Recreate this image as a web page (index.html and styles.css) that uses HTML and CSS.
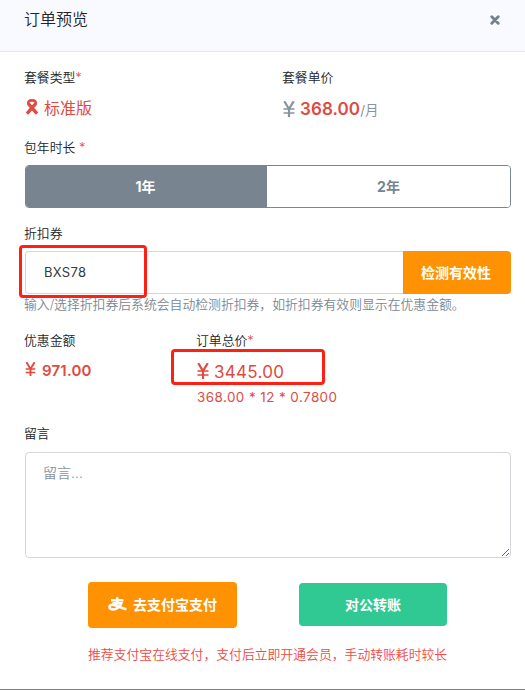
FILE: index.html
```html
<!DOCTYPE html>
<html lang="zh-CN">
<head>
    <meta charset="UTF-8">
    <meta name="viewport" content="width=device-width, initial-scale=1.0">
    <title>订单预览</title>
    <link rel="stylesheet" href="styles.css">
</head>
<body>
    <svg class="icon-defs">
        <symbol id="icon-yen" viewBox="0 0 12 16">
            <path d="M1.3 0.2 L6 8 L10.7 0.2 M6 8 V16" fill="none" stroke="currentColor" stroke-width="2.2"/>
            <path d="M0.5 8 H11.5 M0.5 12 H11.5" fill="none" stroke="currentColor" stroke-width="1.7"/>
        </symbol>
    </svg>
    <div class="modal">
        <div class="modal-header">
            <h1>订单预览</h1>
            <button type="button" class="close-button" aria-label="关闭">
                <svg width="10" height="10" viewBox="0 0 10 10"><path d="M1.8 1.8 L8.2 8.2 M8.2 1.8 L1.8 8.2" stroke="#74808b" stroke-width="2.9" stroke-linecap="round"/></svg>
            </button>
        </div>

        <div class="modal-body">
            <div class="plan-row">
                <div>
                    <label>套餐类型<span class="required">*</span></label>
                    <div class="plan-name">
                        <svg width="14" height="16" viewBox="0 0 14 16">
                            <path d="M3.3 4.6 L12 14.6 M10.7 4.6 L2 14.6" fill="none" stroke="currentColor" stroke-width="3.3"/>
                            <path d="M3.5 5.4 C2.6 2.6 4 1.4 7 1.4 C10 1.4 11.4 2.6 10.5 5.4" fill="none" stroke="currentColor" stroke-width="2.6"/>
                        </svg>
                        <span>标准版</span>
                    </div>
                </div>
                <div>
                    <label>套餐单价</label>
                    <div class="unit-price">
                        <svg class="yen"><use href="#icon-yen"/></svg>
                        <strong>368.00</strong><span class="unit">/月</span>
                    </div>
                </div>
            </div>

            <div class="form-group duration">
                <label>包年时长 <span class="required">*</span></label>
                <div class="button-group">
                    <button type="button" class="active">1年</button>
                    <button type="button">2年</button>
                </div>
            </div>

            <div class="form-group coupon">
                <label for="coupon">折扣券</label>
                <div class="input-group">
                    <input type="text" id="coupon" value="BXS78">
                    <button type="button">检测有效性</button>
                    <span class="mark mark-coupon"></span>
                </div>
                <div class="hint">输入/选择折扣券后系统会自动检测折扣券，如折扣券有效则显示在优惠金额。</div>
            </div>

            <div class="total-row">
                <div>
                    <label>优惠金额</label>
                    <div class="discount">
                        <svg class="yen"><use href="#icon-yen"/></svg>
                        <strong>971.00</strong>
                    </div>
                </div>
                <div>
                    <label>订单总价<span class="required">*</span></label>
                    <div class="total">
                        <svg class="yen"><use href="#icon-yen"/></svg>
                        <span>3445.00</span>
                        <span class="mark mark-total"></span>
                    </div>
                    <div class="formula">368.00 * 12 * 0.7800</div>
                </div>
            </div>

            <div class="form-group message">
                <label for="message">留言</label>
                <textarea id="message" placeholder="留言..."></textarea>
            </div>

            <div class="actions">
                <button type="button" class="alipay-button">
                    <svg width="19" height="14" viewBox="0 0 19 14" fill="none" stroke="currentColor">
                        <path d="M3 3.2 H15.5 M9.2 0.3 V6.2 M4.5 6.2 H13.4 C12.2 10 8.4 12.6 4.7 12.4 C0.3 12 0.5 8 4.5 7.8 C8.8 7.8 12 11 18.4 12.2" stroke-width="2.5"/>
                    </svg>
                    <span>去支付宝支付</span>
                </button>
                <button type="button" class="transfer-button">对公转账</button>
            </div>
            <p class="pay-tip">推荐支付宝在线支付，支付后立即开通会员，手动转账耗时较长</p>
        </div>
    </div>
</body>
</html>
```

FILE: styles.css
```css
* {
    margin: 0;
    padding: 0;
    box-sizing: border-box;
}

body {
    background: #fff;
    color: #212529;
    font-family: Inter, "Noto Sans CJK SC", sans-serif;
    font-size: 12.83px;
    overflow: hidden;
}

button, input, textarea {
    font-family: inherit;
}

button {
    border: none;
    font-size: 14px;
    font-weight: 700;
    cursor: pointer;
}

.icon-defs {
    display: none;
}

.modal {
    height: 690px;
    border-bottom: 1px solid #808080;
}

.modal-header {
    display: flex;
    justify-content: space-between;
    align-items: center;
    height: 52px;
    padding: 0 25px 12px 24px;
    background: #f9faff;
    border-bottom: 1px solid #e3e7ed;
}

h1 {
    margin-top: -2px;
    font-size: 16px;
    font-weight: 350;
    line-height: 24px;
}

.close-button {
    display: flex;
    background: none;
}

.modal-body {
    padding: 15px 14px 0 25px;
}

label {
    display: block;
    margin-left: -1px;
    line-height: 21px;
    font-weight: 350;
    white-space: pre;
}

.required, .plan-name, .discount, .total, .formula {
    color: #e04a3f;
}

.yen {
    width: 12px;
    height: 16px;
    flex: none;
}

.plan-row {
    display: grid;
    grid-template-columns: 258px 1fr;
    height: 70px;
}

.plan-name, .unit-price {
    display: flex;
    align-items: center;
    height: 38px;
}

.plan-name {
    gap: 5px;
    font-size: 16px;
}

.unit-price {
    color: #8794a1;
    padding-top: 4px;
}

.unit-price .yen {
    margin-right: 5px;
}

.unit-price strong {
    color: #e04a3f;
    font-size: 17px;
    font-weight: 600;
    letter-spacing: 0.1px;
}

.unit {
    font-size: 13.5px;
}

.button-group {
    display: flex;
    height: 43px;
    margin-top: 7px;
    border: 1px solid #78848f;
    border-radius: 4px;
    overflow: hidden;
}

.button-group button {
    flex: 1;
    padding-bottom: 2px;
    background: #fff;
    color: #78848f;
}

.button-group .active {
    flex: none;
    width: 241px;
    padding-right: 2px;
    background: #78848f;
    color: #fff;
}

.coupon {
    margin-top: 15px;
}

.input-group {
    display: flex;
    position: relative;
    height: 43px;
    margin-top: 7px;
}

.input-group input {
    flex: 1;
    min-width: 0;
    padding: 0 18px 1px;
    border: 1px solid #d5d7df;
    border-right: none;
    border-radius: 4px 0 0 4px;
    color: #343a40;
    font-size: 13px;
    letter-spacing: 0.3px;
}

.input-group button {
    width: 108px;
    padding: 0 2px 2px 0;
    background: #ff9203;
    color: #fff;
    border-radius: 0 4px 4px 0;
}

.mark {
    position: absolute;
    border: 3px solid #ff2013;
    border-radius: 4px;
    pointer-events: none;
}

.mark-coupon {
    left: -6px;
    top: -6px;
    width: 128px;
    height: 53px;
}

.hint {
    margin-left: -1px;
    color: #7b8794;
    font-size: 12.83px;
    font-weight: 350;
    line-height: 21px;
    white-space: nowrap;
}

.total-row {
    display: grid;
    grid-template-columns: 172px 1fr;
    height: 93px;
    margin-top: 15px;
}

.discount, .total {
    display: flex;
    align-items: center;
    gap: 6px;
    height: 36px;
}

.discount {
    padding-top: 2px;
}

.discount .yen {
    width: 11px;
    height: 14px;
    margin-top: -2px;
}

.discount strong {
    font-size: 15px;
    font-weight: 600;
    letter-spacing: 0.2px;
}

.total {
    position: relative;
    padding-top: 6px;
    gap: 5px;
    font-size: 17px;
    letter-spacing: 0.3px;
}

.total .yen {
    margin-top: -2px;
}

.mark-total {
    left: -26px;
    top: -2px;
    width: 154px;
    height: 36px;
}

.formula {
    font-size: 13.4px;
    line-height: 20px;
    letter-spacing: 0.45px;
}

textarea {
    display: block;
    width: 100%;
    height: 106px;
    margin-top: 8px;
    padding: 10px 17px;
    border: 1px solid #d5d7df;
    border-radius: 4px;
    font-size: 14px;
    font-weight: 350;
    line-height: 20px;
}

textarea::placeholder {
    color: #8794a1;
}

.actions {
    display: flex;
    align-items: flex-start;
    justify-content: space-between;
    width: 359px;
    margin: 24px 0 0 63px;
}

.actions button {
    display: flex;
    align-items: center;
    justify-content: center;
    gap: 6px;
    padding-bottom: 2px;
    color: #fff;
    border-radius: 4px;
}

.actions .alipay-button {
    width: 149px;
    height: 46px;
    background: #ff9203;
}

.actions .transfer-button {
    width: 148px;
    height: 43px;
    margin-top: 1px;
    background: #30c993;
}

.pay-tip {
    margin: 16px 0 0 63px;
    color: #f14a43;
    font-weight: 350;
    line-height: 21px;
    white-space: nowrap;
}
```
